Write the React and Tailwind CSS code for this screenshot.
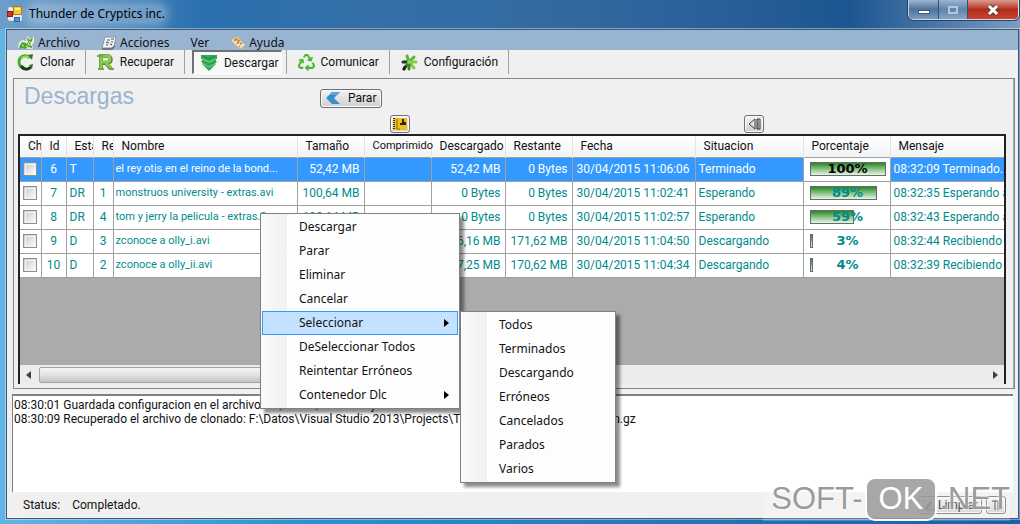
import React from 'react';
import { FaRecycle } from 'react-icons/fa';

const rows = [
  { id: 6, state: 'T', retry: '', name: 'el rey otis en el reino de la bond...', size: '52,42 MB', packed: '', done: '52,42 MB', left: '0 Bytes', date: '30/04/2015 11:06:06', status: 'Terminado', percent: 100, message: '08:32:09 Terminado.' },
  { id: 7, state: 'DR', retry: '1', name: 'monstruos university - extras.avi', size: '100,64 MB', packed: '', done: '0 Bytes', left: '0 Bytes', date: '30/04/2015 11:02:41', status: 'Esperando', percent: 89, message: '08:32:35 Esperando a' },
  { id: 8, state: 'DR', retry: '4', name: 'tom y jerry la pelicula - extras.2', size: '102,64 MB', packed: '', done: '0 Bytes', left: '0 Bytes', date: '30/04/2015 11:02:57', status: 'Esperando', percent: 59, message: '08:32:43 Esperando a' },
  { id: 9, state: 'D', retry: '3', name: 'zconoce a olly_i.avi', size: '', packed: '', done: '6,16 MB', left: '171,62 MB', date: '30/04/2015 11:04:50', status: 'Descargando', percent: 3, message: '08:32:44 Recibiendo' },
  { id: 10, state: 'D', retry: '2', name: 'zconoce a olly_ii.avi', size: '', packed: '', done: '7,25 MB', left: '170,62 MB', date: '30/04/2015 11:04:34', status: 'Descargando', percent: 4, message: '08:32:39 Recibiendo' },
];

const columns = [
  { label: 'Ch', width: 'w-[21px]', style: 'overflow-hidden' },
  { label: 'Id', width: 'w-[25px]' },
  { label: 'Esta', width: 'w-[27px]', style: 'overflow-hidden' },
  { label: 'Re', width: 'w-[20px]', style: 'overflow-hidden' },
  { label: 'Nombre', width: 'w-[184px]' },
  { label: 'Tamaño', width: 'w-[67px]' },
  { label: 'Comprimido', width: 'w-[67px]', style: 'text-[11px]' },
  { label: 'Descargado', width: 'w-[74px]' },
  { label: 'Restante', width: 'w-[67px]' },
  { label: 'Fecha', width: 'w-[123px]' },
  { label: 'Situacion', width: 'w-[108px]' },
  { label: 'Porcentaje', width: 'w-[87px]' },
  { label: 'Mensaje', width: 'w-auto' },
];

const contextItems = [
  { label: 'Descargar' },
  { label: 'Parar' },
  { label: 'Eliminar' },
  { label: 'Cancelar' },
  { label: 'Seleccionar', submenu: true, active: true },
  { label: 'DeSeleccionar Todos' },
  { label: 'Reintentar Erróneos' },
  { label: 'Contenedor Dlc', submenu: true },
];

const selectItems = ['Todos', 'Terminados', 'Descargando', 'Erróneos', 'Cancelados', 'Parados', 'Varios'].map((label) => ({ label }));

const AppIcon = () => (
  <svg width="16" height="16" viewBox="0 0 16 16" aria-hidden="true">
    <rect x="1" y="1" width="14" height="14" fill="#e8edf5" stroke="#8fa3bd" strokeDasharray="2 1" />
    <rect x="0.5" y="5.5" width="5" height="5" fill="#d2362b" stroke="#8e1d16" />
    <rect x="6.5" y="0.5" width="8" height="8" fill="#f8c832" stroke="#b07d10" />
    <path d="M8 2h5v2H8z" fill="#fdeaa0" />
    <rect x="7.5" y="11.5" width="5" height="4" fill="#5c93dd" stroke="#2f62a8" />
  </svg>
);

const PlantIcon = () => (
  <svg width="17" height="14" viewBox="0 0 17 14" aria-hidden="true">
    <path d="M0 12l1-6 4-2 3 1 1-5 4 3 3-3v6l-2 3 1 4z" fill="#e4f2d6" />
    <path d="M9 1l3 3 3-3-1 4-2 2 1 2-3-1-2 1 2-3zM1 11l3-5 4 1 2 2 4 1v2l-4-1-3 2-3-1-2 1z" fill="#4fa42f" />
    <path d="M4 9l2 1M12 5l-2 3M8 10l2 1" stroke="#d6f5b8" />
  </svg>
);

const NotesIcon = () => (
  <svg width="16" height="14" viewBox="0 0 16 14" aria-hidden="true">
    <path d="M4 1h11l-2 9-2 2H1z" fill="#f7f7f7" stroke="#8b939b" />
    <path d="M6 4h3M10 3h3M5 6l3 1M10 6h2M5 9h2M9 8l2 1" fill="none" stroke="#454b52" strokeWidth="1.2" />
    <path d="M1 12h9l4-3v2l-3 3H1z" fill="#70777e" />
  </svg>
);

const HelpIcon = () => (
  <svg width="16" height="14" viewBox="0 0 16 14" aria-hidden="true">
    <path d="M1 4l6-3 8 8-5 4z" fill="#f5ead0" stroke="#d0c3a4" />
    <path d="M4 5l2-2 3 2-2 3M10 7l2 1M9 10l1 1" fill="none" stroke="#d18a2a" strokeWidth="2" />
  </svg>
);

const CloneIcon = () => (
  <svg width="17" height="17" viewBox="0 0 17 17" aria-hidden="true">
    <path d="M13 4C9 0 2 2 2 8c0 4 3 6 6 7" fill="none" stroke="#3fae2c" strokeWidth="3" />
    <path d="M4 12c3 4 7 4 10 1" fill="none" stroke="#1d3d17" strokeWidth="3" />
    <path d="M4 5c2-3 5-3 8-2" fill="none" stroke="#8fdb55" strokeWidth="2" />
    <path d="M11 1l5-1-1 6zM12 11l4-1-1 5z" fill="#2c7a20" />
  </svg>
);

const RecoverIcon = () => (
  <svg width="17" height="17" viewBox="0 0 17 17" aria-hidden="true">
    <path d="M4 15V2h6c5 0 5 7 0 7H5M9 9l5 6" fill="none" stroke="#5b7a4a" strokeWidth="4" />
    <path d="M4 14V2h6c4 0 4 6 0 6H5M9 9l5 5" fill="none" stroke="#8ccb48" strokeWidth="3" />
    <path d="M0 2h6M1 15h6M12 15h5" stroke="#6fae3c" strokeWidth="2" />
  </svg>
);

const DownloadIcon = () => (
  <svg width="18" height="18" viewBox="0 0 18 18" aria-hidden="true">
    <path d="M1 1h16v4h-1v2h1l-2 3h1l-7 7-7-7h1L1 7h1V5H1z" fill="#2fa84f" />
    <path d="M2 5l7 3 7-3M3 10l6 3 6-3" fill="none" stroke="#8fd3a2" />
    <path d="M3 2l6 3 6-3" fill="none" stroke="#1d8640" />
  </svg>
);

const FlowerIcon = () => (
  <svg width="17" height="17" viewBox="0 0 17 17" aria-hidden="true">
    <g strokeWidth="3" strokeLinecap="round">
      <path d="M8 8L6 2M8 8l5-5" stroke="#58b53a" />
      <path d="M8 8l7 0M8 8l5 6" stroke="#86cf3c" />
      <path d="M8 8L2 8" stroke="#1e3a1c" />
      <path d="M8 8l-5 7M8 8l0 7" stroke="#3c8230" />
      <path d="M3 15l1-2" stroke="#182417" />
    </g>
    <circle cx="8" cy="8" r="2" fill="#8fd85c" />
  </svg>
);

const BackIcon = () => (
  <svg width="14" height="13" viewBox="0 0 14 13" aria-hidden="true">
    <path d="M6 0h8L8 6l6 6H6L0 6z" fill="#3391cc" />
    <path d="M6 0h8l-3 3H4z" fill="#6e9fd4" />
  </svg>
);

const menus = [
  { label: 'Archivo', icon: <PlantIcon /> },
  { label: 'Acciones', icon: <NotesIcon /> },
  { label: 'Ver', icon: null },
  { label: 'Ayuda', icon: <HelpIcon /> },
];

const tools = [
  { label: 'Clonar', icon: <CloneIcon /> },
  { label: 'Recuperar', icon: <RecoverIcon /> },
  { label: 'Descargar', icon: <DownloadIcon />, active: true },
  { label: 'Comunicar', icon: <FaRecycle className="size-[17px] text-[#4db82f]" /> },
  { label: 'Configuración', icon: <FlowerIcon /> },
];

const TitleBar = () => (
  <header className="flex h-[29px] items-start justify-between bg-linear-to-r from-[#6e9dca] via-[#2971af] via-20% to-[#7c9cc0] pl-[7px] pr-px">
    <div className="flex h-7 items-center gap-1.5">
      <AppIcon />
      <h1 className="rounded-full bg-white/25 text-[12px] text-black shadow-[0_0_8px_4px_rgba(255,255,255,0.25)]">
        Thunder de Cryptics inc.
      </h1>
    </div>
    {/* darkest part of the glass sits left of the caption buttons */}
    <div className="flex h-full flex-1 justify-end bg-linear-to-r from-transparent via-[#1c5591] via-80% to-transparent">
      <div className="flex h-5 overflow-hidden rounded-b-[5px] border border-t-0 border-white/70 outline outline-[#2b425e]">
        <button type="button" aria-label="Minimizar" className="flex w-[30px] items-center justify-center border-r border-[#35506e] bg-linear-to-b from-[#9db4cf] via-[#4e739d] via-50% to-[#7c9cc0]">
          <span className="mt-1 h-1 w-3 border border-[#4a5a6c] bg-white" />
        </button>
        <button type="button" aria-label="Maximizar" className="flex w-[29px] items-center justify-center border-r border-[#35506e] bg-linear-to-b from-[#9db4cf] via-[#5f83ac] via-50% to-[#86a5c7]">
          <span className="h-2 w-2.5 border-2 border-[#b5c6d9]" />
        </button>
        <button type="button" aria-label="Cerrar" className="flex w-[50px] items-center justify-center bg-linear-to-b from-[#d99a90] via-[#b32a1a] via-50% to-[#c8452f]">
          <svg width="14" height="12" viewBox="0 0 14 12" aria-hidden="true">
            <path d="M3 2l8 8M11 2l-8 8" stroke="#54403f" strokeWidth="5" />
            <path d="M3 2l8 8M11 2l-8 8" stroke="#fff" strokeWidth="3" />
          </svg>
        </button>
      </div>
    </div>
  </header>
);

const MenuBar = () => (
  <nav className="flex h-5 items-center gap-[21px] overflow-hidden bg-[#99b4d1] pl-[11px] pt-1.5">
    {menus.map((menu) => (
      <button key={menu.label} type="button" className="flex items-center gap-[3px] text-[12px] leading-4">
        {menu.icon}
        {menu.label}
      </button>
    ))}
  </nav>
);

const ToolBar = () => (
  <div className="flex h-6 gap-px font-[Roboto,sans-serif] text-[12px]">
    {tools.map((tool) => (
      <div key={tool.label} className={`flex border-r border-[#a0a0a0] ${tool.active ? 'pl-1.5 pr-1' : 'px-2.5'}`}>
        <button
          type="button"
          className={`flex items-center gap-1.5 ${
            tool.active ? 'border border-l-2 border-t-2 border-[#707070] border-b-white border-r-white bg-[#f7f7f7] pl-1.5 pr-0.5' : ''
          }`}
        >
          {tool.icon}
          {tool.label}
        </button>
      </div>
    ))}
  </div>
);

const Percent = ({ value, selected }) => (
  <div className="relative ml-1.5 mr-1 h-3.5">
    <div
      className="h-full border border-[#6a6a6a] bg-linear-to-b from-[#188a1c] to-[#e4f5e4]"
      style={{ width: `${Math.max(value, 5)}%` }}
    />
    <span className={`absolute inset-0 text-center font-['DejaVu_Sans',sans-serif] text-[13px] font-bold leading-[14px] ${selected ? 'text-black' : 'text-[#008b8b]'}`}>
      {value}%
    </span>
  </div>
);

const DownloadsTable = () => (
  <table className="w-full table-fixed border-collapse whitespace-nowrap text-[12px]">
    <colgroup>
      {columns.map((column) => <col key={column.label} className={column.width} />)}
    </colgroup>
    <thead>
      <tr className="h-[21px] bg-linear-to-b from-white to-[#f2f3f5]">
        {columns.map((column) => (
          <th key={column.label} className={`border-r border-[#e3e4e6] p-0 pl-2 text-left font-normal last:border-r-0 ${column.style || ''}`}>
            {column.label}
          </th>
        ))}
      </tr>
    </thead>
    <tbody>
      {rows.map((row, idx) => {
        const selected = idx === 0;
        const cell = 'overflow-hidden border-r border-y border-[#a0a0a0] p-0 leading-4 last:border-r-0';
        return (
          <tr key={row.id} className={`h-6 ${selected ? 'bg-[#3399ff] text-white' : 'bg-white text-[#008b8b]'}`}>
            <td className={cell}>
              <input
                type="checkbox"
                aria-label={`Seleccionar ${row.name}`}
                className="mx-auto block size-3.5 appearance-none border border-[#8e8f8f] bg-linear-to-br from-[#c4c8cc] to-white outline -outline-offset-3 outline-[#f4f4f4]"
              />
            </td>
            <td className={`${cell} text-center`}>{row.id}</td>
            <td className={`${cell} pl-[3px]`}>{row.state}</td>
            <td className={`${cell} text-center`}>{row.retry}</td>
            <td className={`${cell} pl-0.5 text-[11px]`}>{row.name}</td>
            <td className={`${cell} pr-1 text-right`}>{row.size}</td>
            <td className={`${cell} pr-1 text-right`}>{row.packed}</td>
            <td className={`${cell} pr-1 text-right`}>{row.done}</td>
            <td className={`${cell} pr-1 text-right`}>{row.left}</td>
            <td className={`${cell} pl-1`}>{row.date}</td>
            <td className={`${cell} pl-[3px]`}>{row.status}</td>
            <td className={`${cell} bg-white`}>
              <Percent value={row.percent} selected={selected} />
            </td>
            <td className={`${cell} pl-[3px]`}>{row.message}</td>
          </tr>
        );
      })}
    </tbody>
  </table>
);

const ScrollBar = () => (
  <div className="flex h-[19px] items-center gap-2 bg-[#ececec] px-1.5">
    <svg width="5" height="8" viewBox="0 0 5 8" aria-hidden="true"><path d="M5 0v8L0 4z" fill="#404040" /></svg>
    <div className="h-4 w-2/5 rounded-xs border border-[#a3a3a3] bg-linear-to-b from-[#f5f5f5] via-[#e2e2e2] to-[#c4c4c4]" />
    <svg className="ml-auto" width="5" height="8" viewBox="0 0 5 8" aria-hidden="true"><path d="M0 0v8l5-4z" fill="#404040" /></svg>
  </div>
);

const smallButton = 'flex items-center justify-center rounded-[3px] border border-[#707070] bg-linear-to-b from-[#f4f4f4] to-[#cfcfcf] shadow-[inset_0_0_0_1px_#fafafa]';

const DownloadsPanel = () => (
  <section className="ml-1.5 mr-[3px] mt-1 border border-[#868686] bg-[#f0f0f0] p-1 pr-2 pt-0 font-[Roboto,sans-serif] shadow-[inset_-1px_0_0_#a9a9a9]">
    <div className="flex h-[34px] items-center">
      <h2 className="w-[302px] pl-1.5 font-['Liberation_Sans',sans-serif] text-[23px] text-[#99b4d1]">Descargas</h2>
      <button type="button" className={`${smallButton} mt-1 h-[19px] gap-2 px-[5px] text-[12px]`}>
        <BackIcon />
        Parar
      </button>
    </div>
    <div className="flex h-[21px] items-center pl-[372px]">
      <button type="button" aria-label="Guardar lista" className={`${smallButton} h-[18px] w-5`}>
        <svg width="14" height="12" viewBox="0 0 14 12" aria-hidden="true">
          <path d="M1 0h13v12H1z" fill="#f2bd1d" />
          <path d="M1 0v12" stroke="#403006" strokeWidth="2" strokeDasharray="1 1" />
          <path d="M4 1v10h3" stroke="#8a6a0c" fill="none" />
          <path d="M9 1h2v3h2v3H7V5h2z" fill="#2d2408" />
        </svg>
      </button>
      <button type="button" aria-label="Plegar columnas" className={`${smallButton} ml-[334px] h-[18px] w-5`}>
        <svg width="13" height="12" viewBox="0 0 13 12" aria-hidden="true">
          <path d="M7 1v10L1 6zM9 1h3v10H9zM10 1v10" fill="none" stroke="#3c3c3c" />
        </svg>
      </button>
    </div>
    <div className="border-x-2 border-t-2 border-[#222] bg-[#ababab]">
      <div className="min-h-[229px] overflow-hidden">
        <DownloadsTable />
      </div>
      <ScrollBar />
    </div>
  </section>
);

const MenuList = ({ items, className, label }) => (
  <ul
    role="menu"
    aria-label={label}
    className={`absolute border border-[#808080] bg-linear-to-r from-[#fafafa] from-0% via-[#f1f1f1] via-[26px] to-[#fdfdfd] to-[26px] p-px shadow-[4px_4px_3px_rgba(0,0,0,0.45)] ${className}`}
  >
    {items.map((item) => (
      <li key={item.label} role="none">
        <button
          type="button"
          role="menuitem"
          className={`flex h-6 w-full items-center justify-between border pl-9 pr-2 text-left text-[12px] ${
            item.active ? 'border-[#3399ff] bg-[#c4e1ff]' : 'border-transparent'
          }`}
        >
          {item.label}
          {item.submenu && <svg width="5" height="8" viewBox="0 0 5 8" aria-hidden="true"><path d="M0 0v8l5-4z" /></svg>}
        </button>
      </li>
    ))}
  </ul>
);

const LogPanel = () => (
  <div
    role="log"
    className="mx-[5px] mt-[5px] flex-1 border-l border-t-2 border-[#808080] bg-white px-px pt-0.5 font-[Roboto,sans-serif] text-[12px] leading-[14px]"
  >
    <p>08:30:01 Guardada configuracion en el archivo: F:\Datos\Visual Projects</p>
    <p>08:30:09 Recuperado el archivo de clonado: F:\Datos\Visual Studio 2013\Projects\Thunder\Thunder\bin\x86\clon.gz</p>
  </div>
);

const StatusBar = () => (
  <footer className="flex h-[26px] items-center pl-4 pr-3 font-[Roboto,sans-serif] text-[12px]">
    <span>Status:</span>
    <span className="ml-3">Completado.</span>
    <button type="button" className={`${smallButton} ml-auto h-[18px] w-16 gap-1`}>
      <svg width="12" height="12" viewBox="0 0 12 12" aria-hidden="true">
        <path d="M2 10l6-8 2 2-5 7z" fill="#3a74b8" />
        <path d="M0 2h3M5 11h6" stroke="#555" />
      </svg>
      Limpiar
    </button>
    <button type="button" aria-label="Mostrar registro" className={`${smallButton} ml-1 h-[18px] w-5`}>
      <svg width="10" height="12" viewBox="0 0 10 12" aria-hidden="true">
        <path d="M1 2h6v9M4 2v9M7 4l2 2-2 2" fill="none" stroke="#333" />
      </svg>
    </button>
  </footer>
);

const Watermark = () => (
  <div className="pointer-events-none absolute bottom-[3px] right-2.5 flex items-center gap-0.5 bg-white/20 pl-2 font-['Liberation_Sans',sans-serif] text-[31px] leading-10 text-[#808080]/80 [text-shadow:0_0_2px_white,0_0_3px_white]">
    <span>SOFT-</span>
    <span className="rounded-[10px] border-2 border-white bg-[#999]/85 px-3 text-white [text-shadow:none]">OK</span>
    <span>.NET</span>
  </div>
);

export default function App() {
  return (
    <div className="relative flex min-h-screen flex-col overflow-hidden bg-linear-to-r from-[#62b4e4] via-[#2f8fd0] via-30% to-[#1b5fa6] font-['Noto_Sans',sans-serif] text-[#111]">
      <TitleBar />
      <main className="mb-[5px] ml-1.5 mr-px flex flex-1 flex-col border border-[#3c5a78] bg-[#f0f0f0] shadow-[0_0_0_1px_rgba(255,255,255,0.4)]">
        <MenuBar />
        <ToolBar />
        <DownloadsPanel />
        <LogPanel />
        <StatusBar />
      </main>
      <MenuList items={contextItems} label="Descargas" className="left-[260px] top-[213px] w-[200px]" />
      <MenuList items={selectItems} label="Seleccionar" className="left-[460px] top-[311px] w-[156px]" />
      <Watermark />
    </div>
  );
}
